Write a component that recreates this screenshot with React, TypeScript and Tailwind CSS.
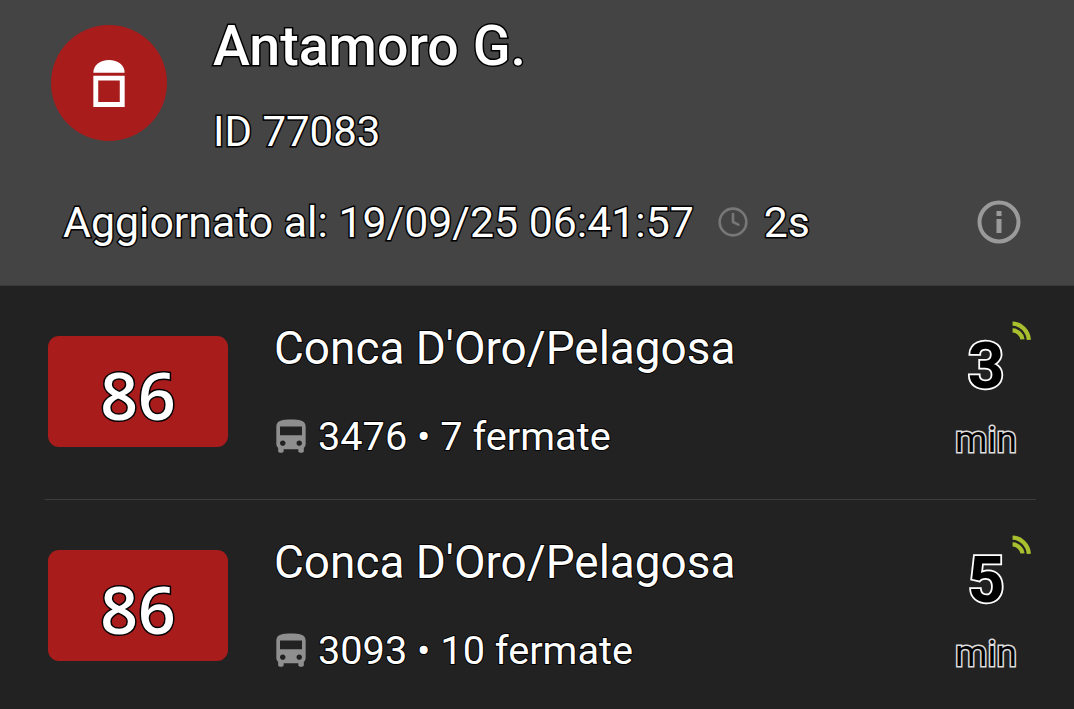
import { Clock } from "lucide-react";

const halo = "[-webkit-text-stroke:3px_#000] [paint-order:stroke_fill]";
const thinHalo = "[-webkit-text-stroke:2px_#000] [paint-order:stroke_fill]";
const inverse = "[-webkit-text-stroke:3.500px_#fff] [paint-order:stroke_fill]";
const inverseSmall = "[-webkit-text-stroke:3px_#e0e0e0] [paint-order:stroke_fill] opacity-[.99]";

function Bus() {
  return (
    <svg viewBox="0 0 24 24" className="ml-[-5px] w-[44px] h-[42px] shrink-0" fill="#8f8f8f" preserveAspectRatio="none">
      <path d="M4 16c0 .88.39 1.670 1 2.220V20c0 .55.45 1 1 1h1c.55 0 1-.45 1-1v-1h8v1c0 .55.45 1 1 1h1c.55 0 1-.45 1-1v-1.780c.61-.55 1-1.340 1-2.220V6c0-3.500-3.580-4-8-4s-8 .5-8 4v10zm3.500 1c-.83 0-1.500-.67-1.500-1.500S6.670 14 7.500 14s1.500.67 1.500 1.500S8.330 17 7.500 17zm9 0c-.83 0-1.500-.67-1.500-1.500s.67-1.500 1.500-1.500 1.500.67 1.500 1.500-.67 1.500-1.500 1.500zm1.500-6H6V6h12v5z" />
    </svg>
  );
}

function Signal() {
  return (
    <svg viewBox="0 0 20 20" className="absolute right-[-28px] top-[-16px] w-[21px] h-[21px]" fill="none" stroke="#a9bf2e" strokeWidth="4">
      <path d="M1.500 2.500c8 0 15 7 15.500 15.500" />
      <path d="M1.500 9c4.500 0 9 4 9.500 8.500" />
    </svg>
  );
}

function Row({ vehicle, stops, eta, last }: { vehicle: string; stops: string; eta: string; last?: boolean }) {
  return (
    <div className={`ml-[45px] mr-[38px] flex items-start h-[214px] border-b ${last ? "border-transparent" : "border-[#3c3c3c]"}`}>
      <div className={`ml-[3px] mt-[50px] pt-[5px] w-[180px] h-[111px] rounded-[11px] bg-[#a81c1c] flex items-center justify-center text-white text-[66px] font-semibold ${halo} font-['Open_Sans',sans-serif] leading-none`}>
        86
      </div>
      <div className="ml-[46px] mt-[37px] flex-1 text-white">
        <div className={`text-[45.900px] leading-[50px] ${thinHalo}`}>Conca D'Oro/Pelagosa</div>
        <div className="mt-[39px] flex items-center gap-[5px] text-[39.700px] leading-[50px]">
          <Bus />
          <span className={thinHalo}>{vehicle} • {stops} fermate</span>
        </div>
      </div>
      <div className="mt-[51px] w-[62px] mr-[19px] flex flex-col items-center">
        <div className={`relative text-black text-[64px] leading-[60px] font-bold ${inverse}`}>
          {eta}
          <Signal />
        </div>
        <div className={`mt-[23px] text-black text-[37px] leading-[40px] ${inverseSmall}`}>min</div>
      </div>
    </div>
  );
}

export default function App() {
  return (
    <div className="w-[1074px] h-[709px] overflow-hidden bg-[#222222] font-['Roboto',sans-serif] antialiased">
      <header className="h-[286px] bg-[#444444] border-b border-[#3a3a3a] pt-[25px]">
        <div className="flex pl-[51px]">
          <div className="w-[116px] h-[116px] rounded-full bg-[#a81c1c] flex items-center justify-center">
            <svg viewBox="0 0 32 48" className="w-[32px] h-[47px]">
              <path d="M0 13C0 5 7 0 16 0s16 5 16 13z" fill="#fff" />
              <path d="M2.500 18.500h27v27h-27z" fill="none" stroke="#fff" strokeWidth="5" />
            </svg>
          </div>
          <div className="ml-[46px] text-white">
            <div className={`text-[55.500px] leading-[44px] font-medium ${halo}`}>Antamoro G.</div>
            <div className={`mt-[38px] text-[42px] leading-[50px] ${halo}`}>ID 77083</div>
          </div>
        </div>
        <div className="mt-[40px] pl-[63px] pr-[53px] flex items-center text-white text-[42.800px] leading-[50px]">
          <span className={halo}>Aggiornato al: 19/09/25 06:41:57</span>
          <Clock className="ml-[23px] w-[32px] h-[32px] text-[#777777]" strokeWidth={2} />
          <span className={`ml-[15px] ${halo}`}>2s</span>
          <svg viewBox="0 0 44 44" className="ml-auto w-[44px] h-[44px]" fill="none">
            <circle cx="22" cy="22" r="19.500" stroke="#9a9a9a" strokeWidth="4" />
            <rect x="19.500" y="19" width="5" height="14" fill="#9a9a9a" />
            <rect x="19.500" y="11" width="5" height="5" fill="#9a9a9a" />
          </svg>
        </div>
      </header>
      <Row vehicle="3476" stops="7" eta="3" />
      <Row vehicle="3093" stops="10" eta="5" last />
    </div>
  );
}
